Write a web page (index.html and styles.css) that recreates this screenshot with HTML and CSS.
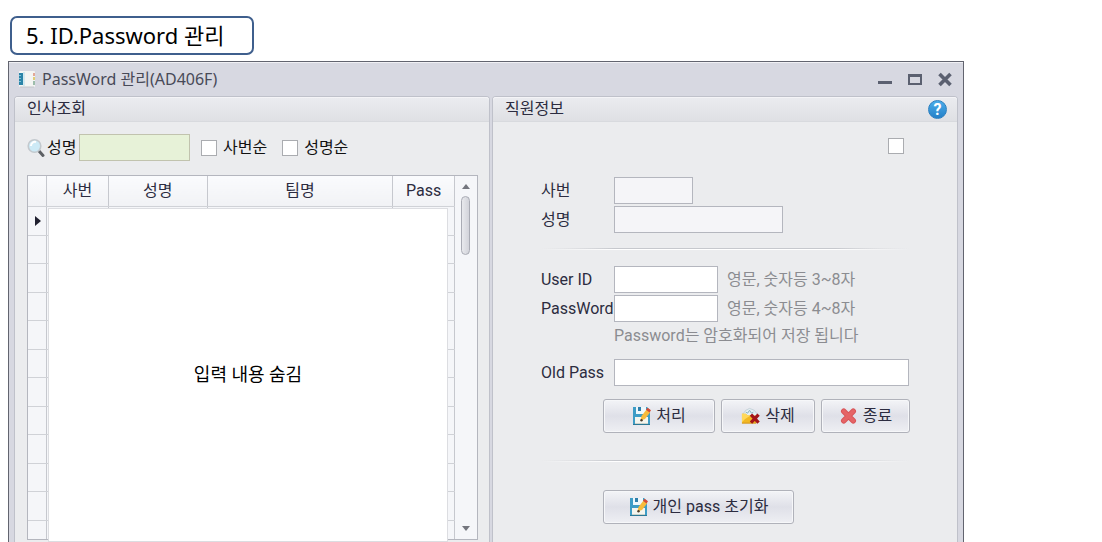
FILE: index.html
```html
<!DOCTYPE html>
<html lang="ko">
<head>
<meta charset="utf-8">
<title>PassWord 관리(AD406F)</title>
<link rel="stylesheet" href="styles.css">
</head>
<body>
<svg class="defs" aria-hidden="true">
  <symbol id="save" viewBox="0 0 19 20">
    <path d="M1 1h14l3 3v15H1z" fill="#3d9cc6"/>
    <path d="M4 1h10v7H4z" fill="#eef8fc"/>
    <path d="M6 1h3v4H6z" fill="#2f7fab"/>
    <path d="M3 11h13v7H3z" fill="#f4f5ee"/>
    <path d="M3 17.500h13" stroke="#cbd3cc"/>
    <path d="M1 18.500h17" stroke="#2b7896"/>
    <path d="M8.500 14.500l1-4.500 5-6.500 3.700 2.700-5.200 6.800z" fill="#f7bb3c"/>
    <path d="M14 3.800l1.600-2 3.400 2.500-1.500 2.200z" fill="#d84a34"/>
    <circle cx="9.500" cy="14.300" r="1.200" fill="#4b3a2a"/>
  </symbol>
  <symbol id="remove" viewBox="0 0 20 18">
    <path d="M2 7l3-4 4-2 5 2 3 4v4H2z" fill="#e4eff3" stroke="#b5c6cd" stroke-width=".7"/>
    <path d="M5 5l2 1 2-3 2 3 2-1" fill="none" stroke="#86afc0"/>
    <path d="M1 6.500h4l2 2h9v8H1z" fill="#f2b822"/>
    <path d="M1 6.500h4l2 2h3l-6 4-3 3z" fill="#ffd85a"/>
    <path d="M1 16.500h15" stroke="#d39519"/>
    <path d="M10.500 7.500l8 8.500M18.500 7.500l-8 8.500" stroke="#a3141a" stroke-width="3.400"/>
  </symbol>
  <symbol id="cross" viewBox="0 0 18 18">
    <path d="M4.500 4.500l9 9M13.500 4.500l-9 9" stroke="#d85458" stroke-width="5.200" stroke-linecap="round"/>
    <path d="M4.500 4.500l9 9M13.500 4.500l-9 9" stroke="#e56466" stroke-width="3.600" stroke-linecap="round"/>
  </symbol>
</svg>

<h1 class="heading">5. ID.Password 관리</h1>

<main class="window">
  <header class="titlebar">
    <svg class="app-icon" viewBox="0 0 18 18" aria-hidden="true">
      <rect x="1" y="1" width="16" height="16" rx="1" fill="#f4f5f3"/>
      <path d="M1 3h4v12H1z" fill="#2b84a8"/>
      <path d="M1 5.500h2M1 8.500h2M1 11.500h2" stroke="#7cc3da"/>
      <path d="M5 2h2v14H5z" fill="#d3e9ef"/>
      <path d="M15 3h2v3h-2z" fill="#e3a796"/>
      <path d="M15 7h2v3h-2z" fill="#e0cd78"/>
      <path d="M15 11h2v4h-2z" fill="#9dbdab"/>
      <path d="M2 17h14" stroke="#c3c4ca"/>
    </svg>
    <h2 class="window-title">PassWord 관리(AD406F)</h2>
    <div class="window-controls">
      <button class="control" type="button" aria-label="최소화"><svg viewBox="0 0 16 16"><path d="M1 11.500h14" stroke="#5b6070" stroke-width="3"/></svg></button>
      <button class="control" type="button" aria-label="최대화"><svg viewBox="0 0 16 16"><path d="M2 4h12v9H2z" fill="none" stroke="#5b6070" stroke-width="2"/><path d="M1 4.500h14" stroke="#5b6070" stroke-width="3"/></svg></button>
      <button class="control" type="button" aria-label="닫기"><svg viewBox="0 0 16 16"><path d="M2.500 3l11 11M13.500 3l-11 11" stroke="#5b6070" stroke-width="3.600"/></svg></button>
    </div>
  </header>

  <div class="panels">
    <section class="panel panel-list">
      <h3 class="panel-title">인사조회</h3>
      <div class="list-body">
        <div class="search">
          <svg class="search-icon" viewBox="0 0 18 20" aria-hidden="true">
            <path d="M12 13l4 4.500" stroke="#5d6064" stroke-width="3" stroke-linecap="round"/>
            <circle cx="7.500" cy="8" r="6.300" fill="#cdeaf6" stroke="#c3c9ce" stroke-width="1.600"/>
            <path d="M4 8a4 4 0 0 1 5-4" fill="none" stroke="#fff" stroke-width="2"/>
          </svg>
          <label class="search-label" for="name-search">성명</label>
          <input class="field search-field" id="name-search" type="text">
          <label class="option"><input class="tick" type="checkbox">사번순</label>
          <label class="option"><input class="tick" type="checkbox">성명순</label>
        </div>
        <div class="grid">
          <table class="table">
            <colgroup><col class="col-mark"><col class="col-no"><col class="col-name"><col class="col-team"><col class="col-pass"></colgroup>
            <thead><tr><th></th><th>사번</th><th>성명</th><th>팀명</th><th>Pass</th></tr></thead>
            <tbody>
              <tr><td><svg class="marker" viewBox="0 0 6 10"><path d="M0 0l6 5-6 5z" fill="#202030"/></svg></td><td></td><td></td><td></td><td></td></tr>
              <tr><td></td><td></td><td></td><td></td><td></td></tr>
              <tr><td></td><td></td><td></td><td></td><td></td></tr>
              <tr><td></td><td></td><td></td><td></td><td></td></tr>
              <tr><td></td><td></td><td></td><td></td><td></td></tr>
              <tr><td></td><td></td><td></td><td></td><td></td></tr>
              <tr><td></td><td></td><td></td><td></td><td></td></tr>
              <tr><td></td><td></td><td></td><td></td><td></td></tr>
              <tr><td></td><td></td><td></td><td></td><td></td></tr>
              <tr><td></td><td></td><td></td><td></td><td></td></tr>
              <tr><td></td><td></td><td></td><td></td><td></td></tr>
              <tr class="row-cut"><td></td><td></td><td></td><td></td><td></td></tr>
            </tbody>
          </table>
          <div class="scrollbar">
            <svg class="arrow" viewBox="0 0 8 5"><path d="M0 5l4-5 4 5z" fill="#74767e"/></svg>
            <div class="thumb"></div>
            <svg class="arrow arrow-down" viewBox="0 0 8 5"><path d="M0 0l4 5 4-5z" fill="#74767e"/></svg>
          </div>
          <div class="cover">입력 내용 숨김</div>
        </div>
      </div>
    </section>

    <section class="panel panel-info">
      <div class="panel-title">
        <h3 class="panel-name">직원정보</h3>
        <button class="help" type="button" aria-label="도움말">?</button>
      </div>
      <form class="form">
        <input class="tick tick-lone" type="checkbox" aria-label="선택">
        <div class="rows">
          <label for="emp-no">사번</label><input class="field readonly w-short" id="emp-no" type="text" readonly>
          <label for="emp-name">성명</label><input class="field readonly w-name" id="emp-name" type="text" readonly>
        </div>
        <hr class="rule">
        <div class="rows">
          <label for="user-id">User ID</label>
          <div class="line"><input class="field w-mid" id="user-id" type="text"><span class="hint">영문, 숫자등 3~8자</span></div>
          <label for="password">PassWord</label>
          <div class="line"><input class="field w-mid" id="password" type="password"><span class="hint">영문, 숫자등 4~8자</span></div>
          <p class="hint note">Password는 암호화되어 저장 됩니다</p>
        </div>
        <div class="rows rows-old">
          <label for="old-pass">Old Pass</label><input class="field" id="old-pass" type="password">
        </div>
        <div class="actions">
          <button class="button b-save" type="button"><svg class="icon"><use href="#save"/></svg>처리</button>
          <button class="button b-remove" type="button"><svg class="icon"><use href="#remove"/></svg>삭제</button>
          <button class="button b-exit" type="button"><svg class="icon"><use href="#cross"/></svg>종료</button>
        </div>
        <hr class="rule rule-low">
        <div class="actions">
          <button class="button b-reset" type="button"><svg class="icon"><use href="#save"/></svg>개인 pass 초기화</button>
        </div>
      </form>
    </section>
  </div>
</main>
</body>
</html>
```
FILE: styles.css
```css
* { box-sizing: border-box; }

body {
  margin: 0;
  height: 100vh;
  padding: 16px 138px 0 8px;
  display: flex;
  flex-direction: column;
  align-items: stretch;
  overflow: hidden;
  background: #fff;
  color: #2c2c40;
  font: 16px/24px Roboto, "Noto Sans CJK KR", sans-serif;
}

h1, h2, h3, p { margin: 0; font-weight: 400; }
button, input { font: inherit; color: inherit; }
.defs { display: none; }

.heading {
  align-self: flex-start;
  flex: none;
  margin: 0 2px 6px;
  padding: 0 28px 0 14px;
  border: 2px solid #3f5f8d;
  border-radius: 7px;
  color: #000;
  font: 22px/35px "Noto Sans", "Noto Sans CJK KR", sans-serif;
}

.window {
  flex: 1 0 auto;
  display: flex;
  flex-direction: column;
  padding: 0 5px;
  border: 1px solid #62646f;
  border-bottom: 0;
  background: #d7d8e1;
  box-shadow: inset 0 1px #f0f0f4;
}

.titlebar {
  display: flex;
  align-items: center;
  height: 34px;
  padding: 0 5px 0 4px;
}
.app-icon { width: 18px; height: 18px; margin-right: 6px; }
.window-title {
  flex: 1;
  color: #484a58;
  font: 16px/24px "Noto Sans", "Noto Sans CJK KR", sans-serif;
}
.window-controls { display: flex; gap: 14px; }
.control { width: 16px; height: 16px; padding: 0; border: 0; background: none; }
.control svg { display: block; width: 16px; height: 16px; }

.panels { flex: 1; display: flex; gap: 2px; }
.panel {
  min-width: 0;
  border: 1px solid #bfc1ca;
  border-bottom: 0;
  border-radius: 4px 4px 0 0;
  background: #ebecee;
}
.panel-list { flex: 476 1 0; display: flex; flex-direction: column; }
.panel-info { flex: 466 1 0; }
.panel-title {
  display: flex;
  align-items: center;
  justify-content: space-between;
  height: 25px;
  padding: 0 10px 0 12px;
  border-bottom: 1px solid #d8dade;
  border-radius: 3px 3px 0 0;
  background: linear-gradient(#ebecf0, #dfe0e4);
  box-shadow: inset 0 1px #f4f4f7;
}
.panel-name, h3.panel-title { font-size: 16px; }
.help {
  width: 19px;
  height: 19px;
  padding: 0;
  border: 1px solid #2b7fc0;
  border-radius: 50%;
  background: linear-gradient(#4badea, #2480c8);
  color: #fff;
  font-weight: 700;
  line-height: 17px;
}

.list-body { flex: 1; display: flex; flex-direction: column; padding: 12px 11px 2px 12px; }
.search { display: flex; align-items: center; margin-bottom: 14px; color: #111; }
.search-icon { width: 18px; height: 20px; margin-right: 2px; }
.search-label { width: 32px; }
.option { display: flex; align-items: center; gap: 6px; margin-left: 11px; }
.option + .option { margin-left: 15px; }

.tick {
  appearance: none;
  flex: none;
  width: 16px;
  height: 16px;
  margin: 0;
  border: 1px solid #aaacb0;
  background: #fff;
}
.field {
  width: 100%;
  min-width: 0;
  height: 27px;
  padding: 0 4px;
  border: 1px solid #b4b6be;
  border-radius: 0;
  background: #fff;
}
.field.search-field { width: 111px; background: #e7f2d8; border-color: #c1c3ae; }

.grid {
  position: relative;
  flex: 1;
  display: flex;
  border: 1px solid #b4b6be;
  background: #f5f6f9;
}
.table { flex: 1; align-self: flex-start; table-layout: fixed; border-collapse: collapse; }
.col-mark { width: 19px; }
.col-no { width: 14.4%; }
.col-name { width: 23.2%; }
.col-team { width: 43.5%; }
.col-pass { width: 14.5%; }
.table th, .table td {
  height: 29px;
  padding: 0;
  border-right: 1px solid #c6c8ce;
  border-bottom: 1px solid #d0d2d7;
}
.table th { height: 30px; font-weight: 400; background: linear-gradient(#fafbfd, #f1f2f5); }
.table tr:nth-child(even) td { height: 28px; }
.table .row-cut td, .table tr.row-cut:nth-child(even) td { height: 19px; border-bottom: 0; }
.marker { display: block; width: 6px; height: 10px; margin-left: 7px; }

.scrollbar {
  width: 22px;
  flex: none;
  display: flex;
  flex-direction: column;
  align-items: center;
  gap: 7px;
  padding: 8px 0;
}
.arrow { width: 8px; height: 5px; }
.arrow-down { margin-top: auto; }
.thumb {
  width: 9px;
  height: 59px;
  border: 1px solid #a9abb4;
  border-radius: 5px;
  background: linear-gradient(90deg, #e8e9ed, #d2d3da);
}
.cover {
  position: absolute;
  inset: 32px 29px -3px 20px;
  display: flex;
  align-items: center;
  justify-content: center;
  border: 1px solid #dcdde1;
  background: #fff;
  color: #000;
  font-size: 18px;
}

.form { padding: 16px 48px 0 48px; }
.tick-lone { display: block; margin: 0 5px 23px auto; }
.rows { display: grid; grid-template-columns: 73px 1fr; gap: 2px 0; align-items: center; }
.rows-old { margin-top: 11px; }
.rows label { white-space: nowrap; }
.w-short { width: 79px; }
.w-name { width: 169px; }
.field.w-mid { width: 104px; }
.readonly { background: #f5f5f8; }
.line { display: flex; align-items: center; gap: 9px; }
.hint { color: #8b8c91; white-space: nowrap; }
.note { grid-column: 2; }
.rule {
  height: 2px;
  margin: 15px 0 16px;
  border: 0;
  background: linear-gradient(90deg, transparent, #c6c8cd 20%, #c6c8cd 80%, transparent) top / 100% 1px no-repeat, linear-gradient(90deg, transparent, #fff 20%, #fff 80%, transparent);
}
.rule-low { margin: 27px 0 28px; }
.actions { display: flex; gap: 6px; margin: 13px 0 0 62px; }
.rule-low + .actions { margin-top: 0; }
.button {
  flex: none;
  display: flex;
  align-items: center;
  justify-content: center;
  gap: 5px;
  height: 34px;
  padding: 0;
  border: 1px solid #b0b2ba;
  border-radius: 3px;
  background: linear-gradient(#f3f4f7, #dfe0e8 50%, #eeeff3);
  box-shadow: inset 0 0 0 1px #f6f7f9;
  white-space: nowrap;
}
.icon { width: 19px; height: 20px; }
.b-save { width: 112px; }
.b-remove { width: 94px; }
.b-exit { width: 89px; }
.b-reset { width: 191px; }
```
